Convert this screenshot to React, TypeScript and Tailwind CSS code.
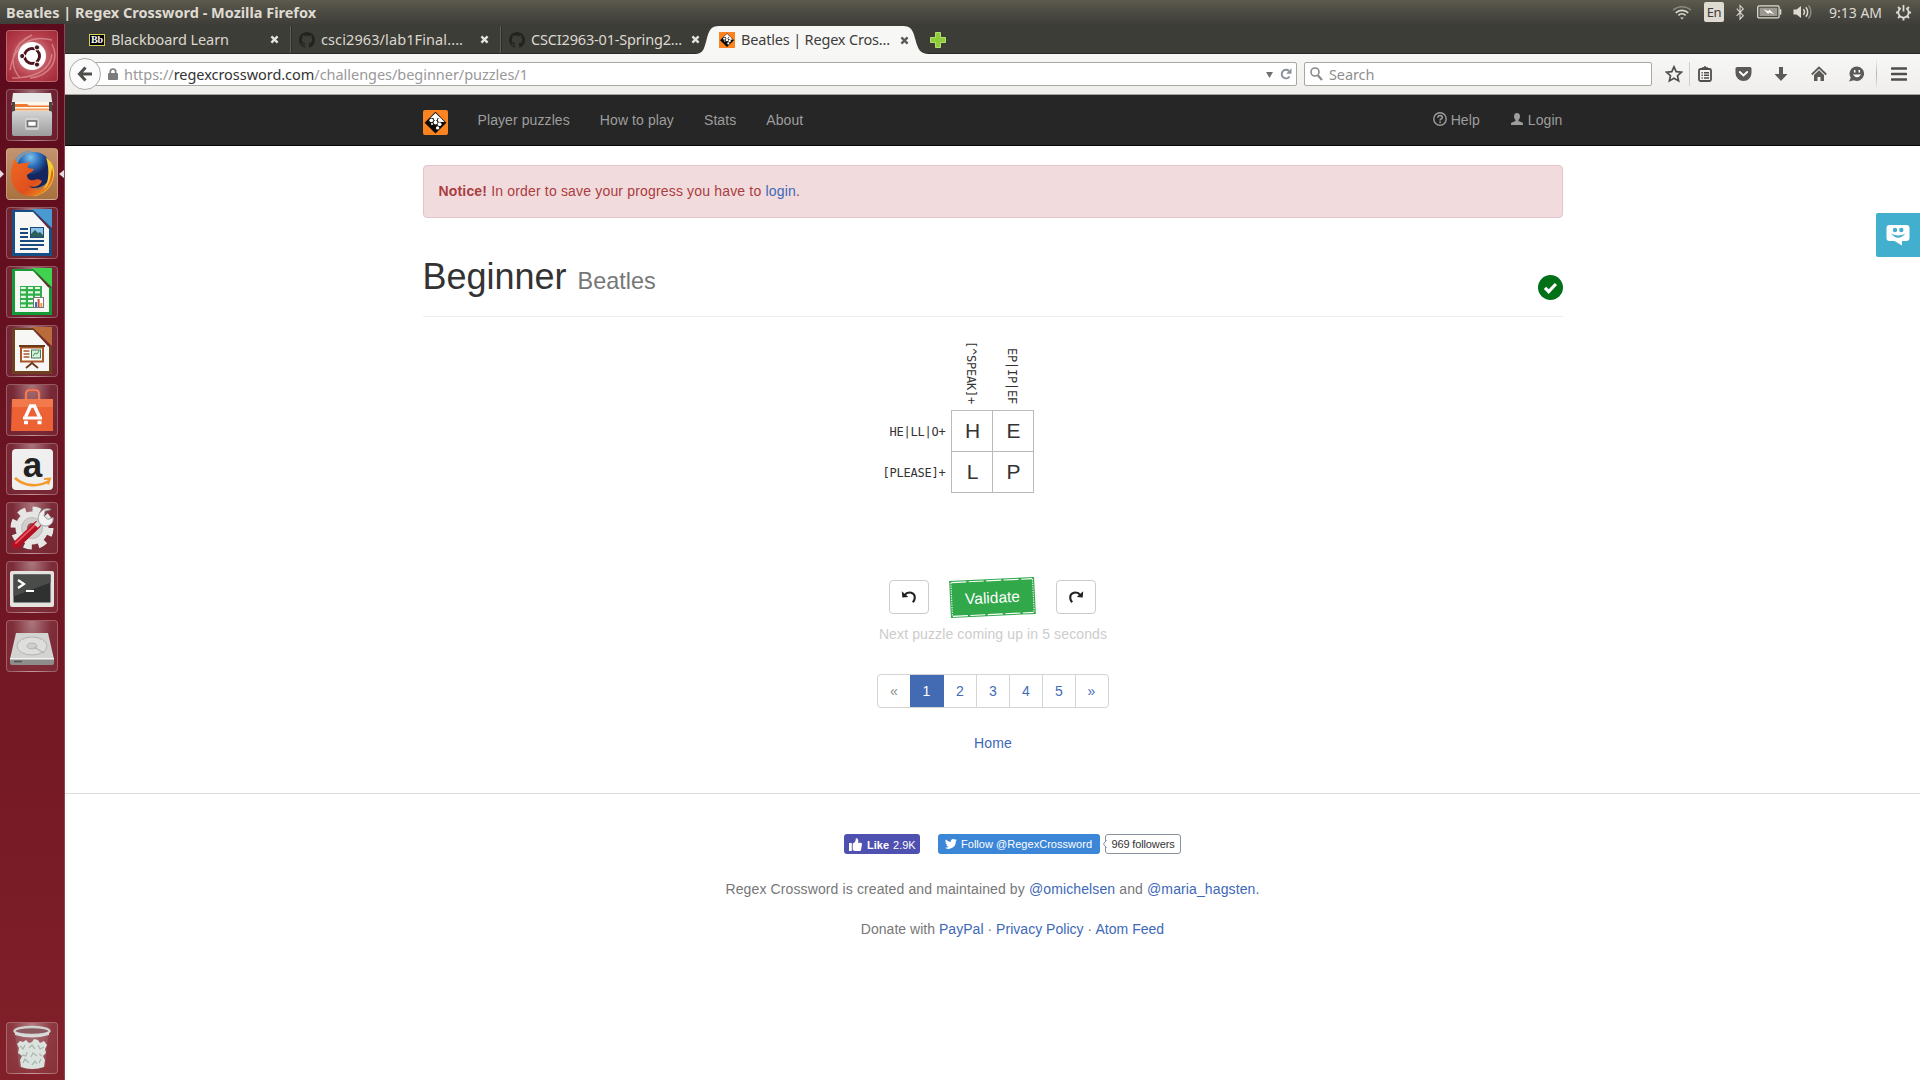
import type { ReactNode } from "react";

const UBUNTU = "font-['Noto_Sans',sans-serif]";

/* ---------- shared glyphs ---------- */

function CrosswordLogo({ className, round = 0 }: { className: string; round?: number }) {
  return (
    <svg viewBox="0 0 25 25" className={className}>
      <rect width="25" height="25" rx={round} fill="#fb8320" />
      <path d="M12.5 1.800 23.400 12.700 12.500 23.600 1.600 12.700z" fill="#0c0907" />
      <path d="M12.500 2.900 17.600 8 7.400 8z" fill="#fff" />
      <path d="M17.200 7.600 21.600 12 17.200 12z" fill="#fff" />
      <circle cx="12.500" cy="8.600" r="1.900" fill="#fff" />
      <circle cx="8.300" cy="10.300" r="1.900" fill="#fff" />
      <circle cx="16.700" cy="9.900" r="2" fill="#fff" />
      <circle cx="12.500" cy="12.600" r="2" fill="#fff" />
      <circle cx="9" cy="14" r="1" fill="#fff" />
      <circle cx="16.600" cy="14.200" r="1.900" fill="#fff" />
      <circle cx="14.600" cy="17.900" r="1.700" fill="#fff" />
      <circle cx="12.500" cy="10.600" r="0.700" fill="#fff" />
    </svg>
  );
}

function GithubMark() {
  return (
    <svg viewBox="0 0 16 16" className="size-4" fill="#232320">
      <path d="M8 0C3.58 0 0 3.58 0 8c0 3.54 2.29 6.53 5.47 7.59.4.07.55-.17.55-.38 0-.19-.01-.82-.01-1.49-2.01.37-2.53-.49-2.69-.94-.09-.23-.48-.94-.82-1.13-.28-.15-.68-.52-.01-.53.63-.01 1.08.58 1.23.82.72 1.21 1.87.87 2.33.66.07-.52.28-.87.51-1.07-1.78-.2-3.64-.89-3.64-3.95 0-.87.31-1.59.82-2.15-.08-.2-.36-1.02.08-2.12 0 0 .67-.21 2.2.82.64-.18 1.32-.27 2-.27s1.36.09 2 .27c1.53-1.04 2.2-.82 2.2-.82.44 1.1.16 1.92.08 2.12.51.56.82 1.27.82 2.15 0 3.07-1.87 3.75-3.65 3.95.29.25.54.73.54 1.48 0 1.07-.01 1.93-.01 2.2 0 .21.15.46.55.38A8.01 8.01 0 0 0 16 8c0-4.42-3.58-8-8-8z" />
    </svg>
  );
}

function CloseX({ color }: { color: string }) {
  return (
    <svg viewBox="0 0 9 9" className="size-[9px]">
      <path d="M1.4 1.4l6.2 6.2M7.6 1.4L1.4 7.6" stroke={color} strokeWidth="2.4" />
    </svg>
  );
}

/* ---------- top panel ---------- */

function TopPanel() {
  return (
    <header className={`flex h-6 shrink-0 items-center bg-gradient-to-b from-[#5c5a4d] via-[#4c4b43] to-[#3f3e39] pl-1.5 text-[#dfdbd2] ${UBUNTU}`}>
      <span className="text-[14.5px] leading-6 font-bold whitespace-nowrap">Beatles | Regex Crossword - Mozilla Firefox</span>
      <div className="ml-auto flex items-center pr-[8px]">
        <svg viewBox="0 0 20 16" className="h-4 w-5" fill="none" stroke="#dfdbd2" strokeWidth="1.7">
          <path d="M1.2 6.2a13 13 0 0 1 17.6 0" stroke="#8b897f" />
          <path d="M3.8 8.8a9 9 0 0 1 12.4 0M6.4 11.3a5.3 5.3 0 0 1 7.2 0" />
          <path d="M8.2 13.4h3.6L10 15.4z" fill="#dfdbd2" stroke="none" />
        </svg>
        <span className="ml-3 flex h-5 w-5 items-center justify-center rounded-[2px] bg-[#dfdbd2] pt-px text-[13px] tracking-[-0.5px] text-[#3c3b37]">En</span>
        <svg viewBox="0 0 10 18" className="ml-[11px] h-[17px] w-2.5" fill="none" stroke="#dfdbd2" strokeWidth="1.1">
          <path d="M1.5 5l7 7.4L5 16V1.6l3.5 3.6-7 7.3" />
        </svg>
        <svg viewBox="0 0 25 14" className="ml-3 h-3.5 w-[25px]">
          <rect x="0.7" y="0.9" width="21.4" height="12" rx="1.5" fill="none" stroke="#dfdbd2" strokeWidth="1.3" />
          <rect x="2.6" y="2.8" width="17.6" height="8.2" fill="#9b998f" />
          <path d="M23.6 4.2v5.4" stroke="#dfdbd2" strokeWidth="1.4" />
          <path d="M6.5 4.2l5 2.1.8-1.9 5 5.2-5.2-2.3-.8 1.8z" fill="#fff" />
        </svg>
        <svg viewBox="0 0 20 16" className="ml-[11px] h-4 w-5" fill="none" stroke="#dfdbd2" strokeWidth="1.5">
          <path d="M0.5 5.5h3L8 2v12l-4.500-3.500h-3z" fill="#dfdbd2" stroke="none" />
          <path d="M10.300 5.300a4 4 0 0 1 0 5.400M12.800 3.200a7 7 0 0 1 0 9.600" />
          <path d="M15.500 1.500a10 10 0 0 1 0 13" stroke="#8b897f" />
        </svg>
        <span className="ml-4 w-[53px] text-[14px] whitespace-nowrap">9:13 AM</span>
        <svg viewBox="0 0 18 18" className="ml-[13px] size-[17px]" fill="none" stroke="#dfdbd2">
          <path d="M6 4.400a5.500 5.500 0 1 0 6 0" strokeWidth="1.900" />
          <path d="M9 1v7" strokeWidth="1.800" />
          <path d="M9 14.500V17.500M1 9h3M14 9h3M3.200 14.800l2-2M14.800 14.800l-2-2M3.200 3.200l2 2M14.800 3.200l-2 2" strokeWidth="2" />
        </svg>
      </div>
    </header>
  );
}

/* ---------- launcher ---------- */

function Tile({ children, bg }: { children: ReactNode; bg: string }) {
  return (
    <div className={`size-[52px] shrink-0 overflow-hidden rounded-[4px] border border-white/25 ${bg}`}>
      <svg viewBox="1 1 50 50" className="size-full">{children}</svg>
    </div>
  );
}

const GLASS = "bg-[radial-gradient(ellipse_at_top,rgba(255,255,255,0.42),rgba(255,255,255,0.1)_55%,rgba(255,255,255,0.07))]";

function OfficePage({ dark, light, children }: { dark: string; light: string; children: ReactNode }) {
  return (
    <>
      <path d="M6 3h29l11 13v33H6z" fill={dark} />
      <path d="M26 2h20v19z" fill={light} />
      <path d="M9 5h18l16 17v24H9z" fill="#f7f7f6" />
      <path d="M27 3l19 19-4-1z" fill="#7b2335" />
      {children}
    </>
  );
}

function Launcher() {
  return (
    <aside className="relative flex w-[65px] shrink-0 flex-col items-start gap-[7px] border-r border-[#8e4650] bg-gradient-to-b from-[#5c0a1c] to-[#812029] pt-1.5 pb-1.5 pl-1.5">
      <Tile bg="bg-[radial-gradient(circle,#d98a90_15%,#b5404c_60%,#a22936)]">
        <path d="M4 40C8 16 24 4 46 10M14 48C2 34 6 14 26 5M46 14c8 16-2 32-22 34M6 48c16 0 38-4 40-24" stroke="#e7a5a8" strokeWidth="1.500" fill="none" opacity=".6" />
        <circle cx="26" cy="26" r="14" fill="#fff" />
        <circle cx="26" cy="26" r="7.500" fill="none" stroke="#4b1522" strokeWidth="3" />
        <path d="M26 26h-8.500M26 26l5 9M26 26l5-9" stroke="#fff" strokeWidth="1.500" />
        <circle cx="16.200" cy="26" r="2.600" fill="#4b1522" stroke="#fff" />
        <circle cx="31" cy="17.400" r="2.600" fill="#4b1522" stroke="#fff" />
        <circle cx="31" cy="34.600" r="2.600" fill="#4b1522" stroke="#fff" />
        <circle cx="26" cy="26" r="5.800" fill="#fff" />
      </Tile>
      <Tile bg={GLASS}>
        <defs>
          <linearGradient id="cab" x1="0" y1="0" x2="0" y2="1">
            <stop offset="0" stopColor="#d4d4d4" />
            <stop offset="1" stopColor="#9c9c9c" />
          </linearGradient>
        </defs>
        <path d="M7 4h38l1.500 12h-41z" fill="#e9e9e9" />
        <path d="M6 13h40v10H6z" fill="#4b4745" />
        <path d="M9 13h34v9H9z" fill="#fdf8ee" />
        <path d="M9 15h12l2 1.500h20V18H9z" fill="#ee7932" />
        <path d="M9 19.500h34v2H9z" fill="#f0a15e" />
        <rect x="6" y="22" width="40" height="25" rx="2" fill="url(#cab)" />
        <rect x="19" y="29" width="14" height="12" rx="2" fill="#d3d3d3" />
        <rect x="21.500" y="32" width="9" height="5.500" fill="#fff" stroke="#6e6e6e" strokeWidth="1.600" />
      </Tile>
      <div className="relative">
        <svg viewBox="0 0 4 8" className="absolute top-[22px] -left-1.5 h-2 w-1"><path d="M0 0l4 4-4 4z" fill="#e6dede" /></svg>
        <svg viewBox="0 0 5 8" className="absolute top-[22px] left-[53px] h-2 w-[5px]"><path d="M5 0L0 4l5 4z" fill="#e6dede" /></svg>
        <Tile bg="bg-[linear-gradient(#c49370,#a9713f)]">
          <defs>
            <linearGradient id="fox" x1="0" y1="0" x2="1" y2="1">
              <stop offset="0" stopColor="#ee6a24" />
              <stop offset=".6" stopColor="#e04f1c" />
              <stop offset="1" stopColor="#f6a621" />
            </linearGradient>
            <radialGradient id="globe" cx=".4" cy=".15">
              <stop offset="0" stopColor="#7fc3ee" />
              <stop offset=".5" stopColor="#2e73bd" />
              <stop offset="1" stopColor="#15265f" />
            </radialGradient>
          </defs>
          <circle cx="28" cy="22" r="18" fill="url(#globe)" />
          <path d="M40 9c6 5 9 11 8 19-2 12-11 20-22 20 10-4 15-10 16-18 1-7 0-14-2-21z" fill="#f8cb37" />
          <path d="M46 20c2 6 1 11-1 15-4 8-11 13-20 13C13 48 5 39 5 27c0-6 1-11 4-16l3 5c2-1 4-1 7-1 2 0 4-1 6-1-3 2-4 4-3 6l6 1c-1 3-5 4-7 6 0 4 3 6 7 5 3-1 5-1 8 1-2 5-8 7-13 5 6 5 14 5 18 0 3-5 4-11 5-18z" fill="url(#fox)" />
          <path d="M9 11c5-7 12-9 18-8-8 1-13 5-15 13z" fill="#4f9ad6" opacity=".7" />
        </Tile>
      </div>
      <Tile bg={GLASS}>
        <OfficePage dark="#164e86" light="#4a9ad2">
          <path d="M14 22h8M14 26h8M14 30h8M14 34h24M14 38h24M14 42h18" stroke="#1b4b7e" strokeWidth="2" />
          <rect x="24.500" y="20.500" width="13" height="10" fill="#8cc3e6" stroke="#1b4b7e" />
          <path d="M25 30v-3l4-4 3 3 2-1 3 3v2z" fill="#2c5f5c" />
        </OfficePage>
      </Tile>
      <Tile bg={GLASS}>
        <OfficePage dark="#129b36" light="#3fd34f">
          <rect x="14" y="20" width="22" height="22" fill="#2fae4a" />
          <path d="M14.800 22h5M22 22h5M29 22h5M14.800 26.400h5M22 26.400h5M29 26.400h5M14.800 30.800h5M22 30.800h5M29 30.800h5M14.800 35.200h5M22 35.200h5M14.800 39.600h5M22 39.600h5" stroke="#e8fbe9" strokeWidth="2.200" />
          <rect x="27.500" y="31.500" width="10" height="10" fill="#fff" stroke="#777" />
          <path d="M30 41v-5" stroke="#3472b8" strokeWidth="2" />
          <path d="M32.600 41v-8" stroke="#d2483a" strokeWidth="2" />
          <path d="M35.300 41v-4" stroke="#e8a23c" strokeWidth="2" />
        </OfficePage>
      </Tile>
      <Tile bg={GLASS}>
        <OfficePage dark="#6d4022" light="#b96c3b">
          <rect x="15" y="22.500" width="22" height="14" fill="#fff" stroke="#a85527" strokeWidth="2" />
          <path d="M17.500 26h6M17.500 29h6M17.500 32h6" stroke="#a85527" strokeWidth="1.600" />
          <rect x="25.500" y="25" width="9" height="8" fill="#d8eedd" stroke="#3b7b58" />
          <path d="M27 31l2-3 2 1 2-3" stroke="#3a9a52" fill="none" />
          <path d="M13 21h26M26 37v2M20 43l6-5 6 5" stroke="#6b3a1c" strokeWidth="1.800" fill="none" />
        </OfficePage>
      </Tile>
      <Tile bg={GLASS}>
        <path d="M20 16v-6q0-4 4-4h5q4 0 4 4v6" stroke="#d4563a" strokeWidth="3" fill="none" />
        <path d="M6 15h41v32H5z" fill="#ec6235" />
        <path d="M6 15h41v8H6z" fill="#f1794c" />
        <path d="M20 16v-6q0-4 4-4h5q4 0 4 4v6" stroke="#f19a80" strokeWidth="1.200" fill="none" />
        <path d="M19.500 33l5-11h4l5 11M18 38.500h4M31.500 38.500h4" stroke="#fff" strokeWidth="3.400" fill="none" />
        <path d="M17 34h19" stroke="#fff" strokeWidth="3" />
      </Tile>
      <Tile bg={GLASS}>
        <rect x="6" y="6" width="41" height="41" rx="4" fill="#efefef" />
        <text x="26.500" y="34" textAnchor="middle" fontFamily="Liberation Sans, sans-serif" fontWeight="700" fontSize="35" fill="#222">a</text>
        <path d="M9 35c10 9 24 9 34 3" stroke="#f29a2c" strokeWidth="2.600" fill="none" />
        <path d="M38 36l6-.5-2 6" stroke="#f29a2c" strokeWidth="2" fill="none" />
      </Tile>
      <Tile bg={GLASS}>
        <circle cx="26" cy="26" r="18" fill="none" stroke="#e6e6e4" strokeWidth="7" strokeDasharray="7.600 6.537" />
        <circle cx="26" cy="26" r="16.500" fill="#e6e6e4" />
        <circle cx="26" cy="26" r="10.500" fill="#d0cfcd" stroke="#bbb" />
        <circle cx="26" cy="26" r="5" fill="#9a4a55" />
        <path d="M10 43L31 23" stroke="#b50f22" strokeWidth="7.500" strokeLinecap="round" />
        <path d="M10 41L30 22" stroke="#e4505c" strokeWidth="2" strokeLinecap="round" />
        <path d="M30 24l5-5" stroke="#d9d9d9" strokeWidth="5" />
        <path d="M45 7.500l-6 1.500-1 5 4 3.500 5-2c1 5-3 9-8 8.500-5-.5-8-5-6.500-10C34 9 39 5 45 7.500z" fill="#f2f2f2" stroke="#9d9d9d" />
      </Tile>
      <Tile bg={GLASS}>
        <rect x="4" y="10" width="44" height="36" rx="2" fill="#e4e3e0" />
        <rect x="7.500" y="13.500" width="37" height="28" fill="#2f3130" />
        <path d="M7.500 13.500h37v8l-37 14z" fill="#4a4c4a" />
        <path d="M12 19l6 4-6 4" stroke="#fff" strokeWidth="2.200" fill="none" />
        <path d="M20 30h8" stroke="#fff" strokeWidth="2.200" />
      </Tile>
      <Tile bg={GLASS}>
        <path d="M10 13h32l6 26H4z" fill="#d3d3d1" />
        <path d="M4 38h44v5q0 2-2 2H6q-2 0-2-2z" fill="#8d8d8b" />
        <path d="M4 38h44v1.500H4z" fill="#f3f3f3" />
        <ellipse cx="26" cy="26" rx="15" ry="9" fill="#dededc" stroke="#b5b5b3" />
        <ellipse cx="26" cy="26" rx="5" ry="2.800" fill="#cfcfcd" stroke="#b5b5b3" />
        <path d="M28 27l10 6" stroke="#aaa" />
        <path d="M8 41.500h8" stroke="#555" strokeWidth="1.500" />
      </Tile>
      <div className="mt-auto">
        <Tile bg="bg-[radial-gradient(ellipse_at_top,rgba(255,255,255,0.42),rgba(255,255,255,0.12)_55%,rgba(255,255,255,0.07))]">
          <path d="M9 10l4 35q13 5 26 0l3.500-35z" fill="#a06a70" opacity=".45" />
          <path d="M11 22l3-3 3 1 3-2 3 3 3-1 2-3 4 1 2 3 4-2 3 4-2 4 1 4-3 3 2 4-1 7q-12 4-23 0l-1-7 2-4-4-3 1-5z" fill="#dce3de" />
          <path d="M14 24l3 3 2-4M23 26l3-3 3 4M32 23l2 4 4-2M16 33l4 1 1-4M25 35l2-4 4 3M33 32l3 2M17 41l2-4 4 4M26 43l3-4 2 3M33 41l2-4" stroke="#a9b9b2" strokeWidth="1.300" fill="none" />
          <ellipse cx="26" cy="9" rx="17.500" ry="4" fill="#8b5a60" stroke="#cfd2cf" strokeWidth="2.400" />
          <path d="M9 10v3q17 5 34 0v-3q-17 6-34 0z" fill="#d8dbd8" />
        </Tile>
      </div>
    </aside>
  );
}

/* ---------- browser chrome ---------- */

function Tab({ icon, title, titleClass }: { icon: ReactNode; title: string; titleClass: string }) {
  return (
    <div className="flex h-full w-[210px] items-center border-r border-[#5f5e58] pr-[11px] pl-2 shadow-[1px_0_0_#2e2d29]">
      <span className="flex w-4 shrink-0 justify-center">{icon}</span>
      <span className={`ml-1.5 text-[14.5px] whitespace-nowrap text-[#dcd8cf] ${titleClass}`}>{title}</span>
      <span className="ml-auto"><CloseX color="#e6e3dc" /></span>
    </div>
  );
}

function TabStrip() {
  return (
    <div className={`flex h-[30px] shrink-0 items-start border-b border-[#2b2a27] bg-[#3d3d38] pl-4 ${UBUNTU}`}>
      <div className="mt-0.5 flex h-[27px]">
        <Tab
          titleClass="tracking-[-0.07px]"
          title="Blackboard Learn"
          icon={<span className="flex h-3 w-4 items-center justify-center border border-[#d8cf5a] bg-black font-['Liberation_Serif',serif] text-[10px] leading-none font-bold text-white">Bb</span>}
        />
        <Tab titleClass="tracking-[0.1px]" title="csci2963/lab1Final...." icon={<GithubMark />} />
        <div className="flex h-full w-[202px] items-center pl-2">
          <GithubMark />
          <span className="ml-1.5 text-[14.5px] tracking-[-0.17px] whitespace-nowrap text-[#dcd8cf]">CSCI2963-01-Spring2...</span>
          <span className="ml-[9px]"><CloseX color="#e6e3dc" /></span>
        </div>
      </div>
      <div className="relative mt-0.5 -ml-[8px] h-7 w-[240px]">
        <svg viewBox="0 0 240 28" className="absolute inset-0 h-7 w-[240px]">
          <path d="M0 28C8 28 9 23 11.500 14 14 4 16 0 24 0H208c8 0 10 4 12.500 14C223 23 225 28 234 28z" fill="#f7f7f6" />
        </svg>
        <div className="relative flex h-full items-center pl-[24px]">
          <CrosswordLogo className="size-4" />
          <span className="ml-1.5 text-[14.5px] tracking-[-0.18px] whitespace-nowrap text-[#3e3d3a]">Beatles | Regex Cros...</span>
          <span className="absolute top-[10px] left-[205px]"><CloseX color="#5c5b57" /></span>
        </div>
      </div>
      <svg viewBox="0 0 16 16" className="mt-2 -ml-[5px] size-4">
        <path d="M5.500.5h5v5h5v5h-5v5h-5v-5h-5v-5h5z" fill="#8fce3a" stroke="#b5e070" />
      </svg>
    </div>
  );
}

function Toolbar() {
  return (
    <div className={`flex h-[41px] shrink-0 items-center border-b border-[#a3a39b] bg-gradient-to-b from-[#f7f7f6] to-[#efeeed] pl-[4px] ${UBUNTU}`}>
      <div className="z-10 flex size-8 shrink-0 items-center justify-center rounded-full border border-[#aaa9a4] bg-[#fbfbfb]">
        <svg viewBox="0 0 16 16" className="size-4" fill="none" stroke="#4f4e4b" strokeWidth="3">
          <path d="M8.500 1.500L2.500 8l6 6.500M3 8h12" />
        </svg>
      </div>
      <div className="-ml-1.5 flex h-6 w-[1202px] shrink-0 items-center rounded-r-[2px] border border-[#a9a8a2] bg-white pr-1 pl-3">
        <svg viewBox="0 0 10 12" className="h-3 w-2.5">
          <path d="M2.300 6V3.700a2.700 2.700 0 0 1 5.400 0V6" fill="none" stroke="#7b7b7b" strokeWidth="1.700" />
          <rect y="5" width="10" height="7" rx="1" fill="#7b7b7b" />
        </svg>
        <span className="ml-1.5 pt-0.5 text-[14.5px] tracking-[-0.04px] whitespace-nowrap text-[#999]">
          https://<span className="text-[#333]">regexcrossword.com</span>/challenges/beginner/puzzles/1
        </span>
        <svg viewBox="0 0 8 7" className="mt-0.5 mr-[7px] ml-auto h-[6px] w-[7px]"><path d="M0 0h8L4 7z" fill="#6f6f6f" /></svg>
        <svg viewBox="0 0 12 12" className="size-3">
          <path d="M9.600 8.500A4.300 4.300 0 1 1 9 3" fill="none" stroke="#8a909a" strokeWidth="1.900" />
          <path d="M11.500.3v5.400H6.200z" fill="#8a909a" />
        </svg>
      </div>
      <div className="ml-[7px] flex h-6 w-[348px] shrink-0 items-center rounded-[2px] border border-[#a9a8a2] bg-white pl-[5px]">
        <svg viewBox="0 0 13 14" className="h-3.5 w-[13px]" fill="none" stroke="#8a8a8a">
          <circle cx="5" cy="5" r="4" strokeWidth="1.600" />
          <path d="M8 8.500l4 4.500" strokeWidth="2.200" />
        </svg>
        <span className="ml-1.5 pt-0.5 text-[14.5px] tracking-[-0.1px] text-[#8f8f8f]">Search</span>
      </div>
      <div className="ml-[13px] flex items-center">
        <svg viewBox="0 0 18 18" className="size-[18px]"><path d="M9 1.800l2.200 4.800 5.200.6-3.900 3.500 1.100 5.200L9 13.300l-4.600 2.600 1.100-5.200L1.600 7.200l5.200-.6z" fill="none" stroke="#4f4e4b" strokeWidth="1.700" /></svg>
        <span className="ml-1.5 h-6 w-px bg-[#cfcecb]" />
        <svg viewBox="0 0 16 16" className="ml-[7px] size-4" fill="none" stroke="#4f4e4b">
          <rect x="2" y="3" width="12" height="12" rx="1.500" strokeWidth="1.800" />
          <path d="M5 2.500h6" strokeWidth="2.600" />
          <path d="M8 0v2M4.500 6.700h1.300M7 6.700h5M4.500 9.300h1.300M7 9.300h5M4.500 12h1.300M7 12h5" strokeWidth="1.500" />
        </svg>
        <svg viewBox="0 0 17 16" className="ml-[22px] h-4 w-[17px]">
          <path d="M2 1h13q1.500 0 1.500 1.500V7a8 8 0 0 1-16 0V2.500Q.5 1 2 1z" fill="#5b5a57" />
          <path d="M4.800 6l3.700 3.500L12.200 6" fill="none" stroke="#fff" strokeWidth="1.900" strokeLinecap="round" />
        </svg>
        <svg viewBox="0 0 14 16" className="ml-[22px] h-4 w-3.5"><path d="M5 1h4v7h4.500L7 15 .5 8H5z" fill="#5b5a57" /></svg>
        <svg viewBox="0 0 16 16" className="ml-[23px] size-4">
          <path d="M.8 8.500L8 1.500l7.200 7" fill="none" stroke="#5b5a57" strokeWidth="1.800" />
          <path d="M8 4.200l5 4.800v6H9.500v-4h-3v4H3V9z" fill="#5b5a57" />
        </svg>
        <svg viewBox="0 0 17 16" className="ml-[21px] h-4 w-[17px]">
          <path d="M9 .5a7.200 7.200 0 1 1-3.200 13.700L1 15.500l1.800-3.800A7.200 7.200 0 0 1 9 .5z" fill="#5b5a57" />
          <path d="M6.700 4v2.500M11.300 4v2.500" stroke="#fff" strokeWidth="1.500" />
          <path d="M4.800 8.500q4.200 5.500 8.400 0z" fill="#fff" />
        </svg>
        <span className="ml-[11px] h-8 w-px bg-gradient-to-b from-transparent via-[#b5b4b0] to-transparent" />
        <svg viewBox="0 0 16 16" className="ml-[14px] size-4"><path d="M1 2.500h14M1 8h14M1 13.500h14" stroke="#4f4e4b" strokeWidth="2.600" strokeLinecap="round" /></svg>
      </div>
    </div>
  );
}

/* ---------- page ---------- */

function Navbar() {
  return (
    <nav className="flex h-[51px] shrink-0 justify-center border-b border-[#080808] bg-[#262626] text-sm tracking-[0.09px] text-[#9d9d9d]">
      <div className="flex w-[1140px] items-start">
        <CrosswordLogo className="mt-[15px] size-[25px]" round={2} />
        <div className="mt-[15px] ml-[30px] flex gap-[30px] leading-5 whitespace-nowrap">
          <span>Player puzzles</span>
          <span>How to play</span>
          <span>Stats</span>
          <span>About</span>
        </div>
        <div className="mt-[15px] ml-auto flex leading-5">
          <svg viewBox="0 0 14 14" className="mt-[2px] mr-1 size-3.5" fill="none" stroke="#9d9d9d">
            <circle cx="7" cy="7" r="6.200" strokeWidth="1.400" />
            <path d="M4.900 5.700c0-2.800 4.400-2.800 4.400-.3C9.300 7 7.100 6.900 7.100 8.600M7.100 9.600v1.500" strokeWidth="1.600" />
          </svg>
          <span>Help</span>
          <svg viewBox="0 0 12 12" className="mt-[3px] mr-[5px] ml-[31px] size-3" fill="#9d9d9d">
            <path d="M6 0c2 0 3 1.300 3 3.200 0 1.600-.7 3-1.500 3.700v1l3.700 1.600q.8.400.8 1.200V12H0v-1.300q0-.8.8-1.200l3.700-1.600v-1C3.700 6.200 3 4.800 3 3.200 3 1.300 4 0 6 0z" />
          </svg>
          <span>Login</span>
        </div>
      </div>
    </nav>
  );
}

const rows = [
  { clue: "HE|LL|O+", cells: ["H", "E"] },
  { clue: "[PLEASE]+", cells: ["L", "P"] },
];

const CLUE = "font-['DejaVu_Sans_Mono',monospace] text-[12px] tracking-[-0.22px] text-[#333]";

function Puzzle() {
  return (
    <div className="mx-auto grid w-[220px] grid-cols-[68px_83px] justify-start">
      <span />
      <div className="grid h-[72px] grid-cols-[41px_41px] pb-[6px]">
        {["[^SPEAK]+", "EP|IP|EF"].map((clue) => (
          <div key={clue} className="flex items-end justify-center pr-px">
            <span className={`leading-4 [writing-mode:vertical-rl] ${CLUE}`}>{clue}</span>
          </div>
        ))}
      </div>
      <div className="flex flex-col">
        {rows.map((r) => (
          <span key={r.clue} className={`flex h-[41px] items-center justify-end pt-[3px] pr-[5px] whitespace-nowrap ${CLUE}`}>{r.clue}</span>
        ))}
      </div>
      <div className="grid grid-cols-[41px_41px] border-t border-l border-[#bbb]">
        {rows.flatMap((r) => r.cells).map((c) => (
          <span key={c} className="flex h-[41px] items-center justify-center border-r border-b border-[#bbb] pb-px pl-[2px] text-[21px] leading-none text-[#333]">{c}</span>
        ))}
      </div>
    </div>
  );
}

function TurnArrow({ flip = false }: { flip?: boolean }) {
  return (
    <svg viewBox="0 0 16 14" className={`h-3.5 w-4 ${flip ? "-scale-x-100" : ""}`}>
      <path d="M3.500 5.300C7 .5 14.500 2.500 13.700 8.500c-.2 1.500-.8 2.600-1.900 3.800" fill="none" stroke="#222" strokeWidth="2.100" />
      <path d="M.8 1.200L1.300 7.500l6-.6z" fill="#222" />
    </svg>
  );
}

function Controls() {
  const btn = "flex h-[34px] w-10 items-center justify-center rounded-[4px] border border-[#ccc] bg-white";
  return (
    <div className="flex h-[37px] items-start justify-center">
      <button className={btn}><TurnArrow /></button>
      <button className="relative -mt-px mr-[21px] ml-[21px] flex h-[37px] w-[85px] -rotate-[2.800deg] items-center justify-center bg-[#31a84a] pt-px text-[15.5px] text-white">
        <svg viewBox="0 0 85 37" className="absolute inset-0 h-[37px] w-[85px]" fill="none" stroke="#fff" strokeWidth="1.100">
          <path d="M2 1.600h81M2 35.400h81" strokeDasharray="15 2.500" />
          <path d="M1.600 2v33M83.400 2v33" strokeDasharray="1.200 1.200" />
        </svg>
        <span>Validate</span>
      </button>
      <button className={btn}><TurnArrow flip /></button>
    </div>
  );
}

function Pagination() {
  return (
    <div className="mx-auto flex h-[34px] w-[232px] overflow-hidden rounded-[4px] border border-[#d4d4d4] text-sm text-[#426bb3]">
      <span className="flex w-8 items-center justify-center pl-px text-[#888]">«</span>
      <span className="-my-px flex w-[34px] items-center justify-center bg-[#426bb3] text-white">1</span>
      {["2", "3", "4", "5"].map((n) => (
        <span key={n} className="flex w-[33px] items-center justify-center border-r border-[#d4d4d4] pl-px">{n}</span>
      ))}
      <span className="flex flex-1 items-center justify-center">»</span>
    </div>
  );
}

function Link({ children }: { children: ReactNode }) {
  return <a className="text-[#3c68b8]">{children}</a>;
}

function Footer() {
  return (
    <footer className="flex flex-col items-center border-t border-[#ddd] pt-10 text-sm leading-5 text-[#777]">
      <div className="flex h-5 pl-[40px]">
        <div className="flex w-[76px] items-center rounded-[3px] bg-[#4f51b0] pl-[5px] text-[11px] text-white">
          <svg viewBox="0 0 13 13" className="size-[13px]" fill="#fff">
            <path d="M0 5h2.800v8H0zM3.700 5.500C6 4.500 6.800 3 6.800.5 8.800-.3 9.800 2 9 4.800h3q1 .2 1 1.200L12 12q-.3 1-1.200 1H5.500l-1.800-1z" />
          </svg>
          <span className="ml-[5px] pt-px font-bold">Like</span>
          <span className="ml-1 pt-px">2.9K</span>
        </div>
        <div className="ml-[18px] flex w-[162px] items-center rounded-[3px] bg-[#3c86d8] pl-[7px] text-[11px] text-white">
          <svg viewBox="0 0 24 20" className="h-2.5 w-3" fill="#fff">
            <path d="M24 2.400a9.800 9.800 0 0 1-2.800.8A4.900 4.900 0 0 0 23.300.5a9.900 9.900 0 0 1-3.100 1.200 4.900 4.900 0 0 0-8.400 4.500A14 14 0 0 1 1.700 1a4.900 4.900 0 0 0 1.500 6.600A4.900 4.900 0 0 1 1 7v.1a4.900 4.900 0 0 0 3.900 4.800 5 5 0 0 1-2.200.1 4.900 4.900 0 0 0 4.600 3.400A9.900 9.900 0 0 1 0 17.400a14 14 0 0 0 21.500-12.400z" />
          </svg>
          <span className="ml-1 tracking-[0.03px] whitespace-nowrap">Follow @RegexCrossword</span>
        </div>
        <div className="relative ml-[5px] flex w-[76px] items-center justify-center rounded-[3px] border border-[#8593a0] bg-white text-[11px] tracking-[-0.13px] text-[#333]">
          <svg viewBox="0 0 4 8" className="absolute top-[5px] -left-[3px] h-2 w-1"><path d="M3.500 0L.5 4l3 4" fill="#fff" stroke="#8593a0" /></svg>
          <span>969 followers</span>
        </div>
      </div>
      <p className="mt-[25px] tracking-[0.12px] whitespace-nowrap">
        Regex Crossword is created and maintained by <Link>@omichelsen</Link> and <Link>@maria_hagsten.</Link>
      </p>
      <p className="mt-5 pl-[40px] tracking-[0.03px] whitespace-nowrap">
        Donate with <Link>PayPal</Link> · <Link>Privacy Policy</Link> · <Link>Atom Feed</Link>
      </p>
    </footer>
  );
}

function Page() {
  return (
    <div className="relative flex min-h-0 flex-1 flex-col bg-white font-['Liberation_Sans',Arial,sans-serif]">
      <Navbar />
      <main className="mx-auto w-[1140px]">
        <div className="mt-[19px] flex h-[53px] items-center rounded-[4px] border border-[#e2c5cb] bg-[#f1dbdd] px-[15px] pb-0.5 text-sm text-[#ab3c40]">
          <span className="tracking-[0.17px]"><b>Notice!</b> In order to save your progress you have to <Link>login</Link>.</span>
        </div>
        <div className="flex h-[99px] items-start justify-between border-b border-[#eee] pt-[39px]">
          <h1 className="text-[36px] leading-10 text-[#333]">
            Beginner <small className="ml-px text-[23.4px] text-[#777]">Beatles</small>
          </h1>
          <svg viewBox="0 0 25 25" className="mt-[18px] size-[25px]">
            <circle cx="12.500" cy="12.500" r="12.500" fill="#017017" />
            <path d="M7 12.800l3.700 3.800 7.200-7.600" fill="none" stroke="#fff" strokeWidth="3.200" />
          </svg>
        </div>
        <div className="h-[21px]" />
        <Puzzle />
        <div className="h-[87px]" />
        <Controls />
        <p className="mt-[7px] pl-px text-center text-sm leading-5 tracking-[0.12px] text-[#ccc]">Next puzzle coming up in 5 seconds</p>
        <div className="h-[30px]" />
        <Pagination />
        <p className="mt-[25px] pl-px text-center text-sm leading-5 tracking-[0.15px]"><Link>Home</Link></p>
        <div className="h-10" />
      </main>
      <Footer />
      <div className="absolute top-[118px] right-0 flex h-11 w-11 items-center justify-center rounded-l-[2px] bg-[#43afce]">
        <svg viewBox="0 0 24 22" className="h-[22px] w-6">
          <path d="M3.500 1h17q3 0 3 3v10q0 3-3 3H16v4.500L8.500 17h-5q-3 0-3-3V4q0-3 3-3z" fill="#fff" />
          <circle cx="9" cy="6" r="2.200" fill="#43afce" />
          <circle cx="15.300" cy="6" r="2.200" fill="#43afce" />
          <path d="M5 9.500q7 8.500 14.500 0-7.500 4-14.500 0z" fill="#43afce" />
        </svg>
      </div>
    </div>
  );
}

export default function App() {
  return (
    <div className="flex h-[1080px] w-[1920px] flex-col overflow-hidden bg-white">
      <TopPanel />
      <div className="flex min-h-0 flex-1">
        <Launcher />
        <div className="flex min-w-0 flex-1 flex-col">
          <TabStrip />
          <Toolbar />
          <Page />
        </div>
      </div>
    </div>
  );
}
